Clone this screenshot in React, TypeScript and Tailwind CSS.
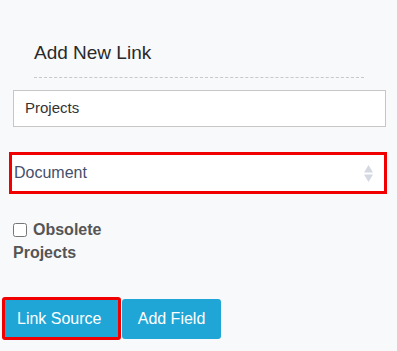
import React from "react";

export default function App() {
  return (
    <div className="min-h-[351px] w-full bg-[#f8f9fb] font-['Liberation_Sans',Arial,sans-serif] overflow-hidden">
      <div className="pt-[41px] pl-[35px] pr-[33px]">
        <h2 className="text-[19px] leading-[24px] text-[#2a2a2a] font-normal pb-[12px] border-b border-dashed border-[#c8c8c8] -ml-[1px]">
          Add New Link
        </h2>
      </div>

      <div className="mt-[12px] ml-[13px] mr-[11px] h-[37px] border border-[#c6c6c6] bg-white flex items-center pl-[11px] text-[15px] text-[#333]">
        Projects
      </div>

      <div className="mt-[25px] ml-[9px] mr-[10px] h-[42px] border-[3px] border-[#f00000] bg-white flex items-center justify-between pl-[2px] pr-[11px] text-[16px] text-[#454f6a]">
        <span>Document</span>
        <svg width="9" height="17" viewBox="0 0 9 17" aria-hidden="true">
          <polygon points="4.5,0 9,7.5 0,7.5" fill="#d3d8e1" />
          <polygon points="0,9.5 9,9.5 4.5,17" fill="#d3d8e1" />
        </svg>
      </div>

      <div className="mt-[24px] ml-[13px] w-[110px] text-[16px] leading-[23px] font-bold text-[#555]">
        <label className="inline">
          <input
            type="checkbox"
            className="w-[14px] h-[14px] m-0 mr-[6px] align-[-2px]"
          />
          Obsolete Projects
        </label>
      </div>

      <div className="mt-[33px] ml-[2px] flex items-center gap-[1px]">
        <button className="h-[43px] w-[119px] border-[3px] border-[#f00000] rounded-[3px] bg-[#1fa6d6] text-white text-[16px] pl-[12px] text-left">
          Link Source
        </button>
        <button className="h-[40px] w-[99px] rounded-[3px] bg-[#1fa6d6] text-white text-[16px] text-center">
          Add Field
        </button>
      </div>
    </div>
  );
}
